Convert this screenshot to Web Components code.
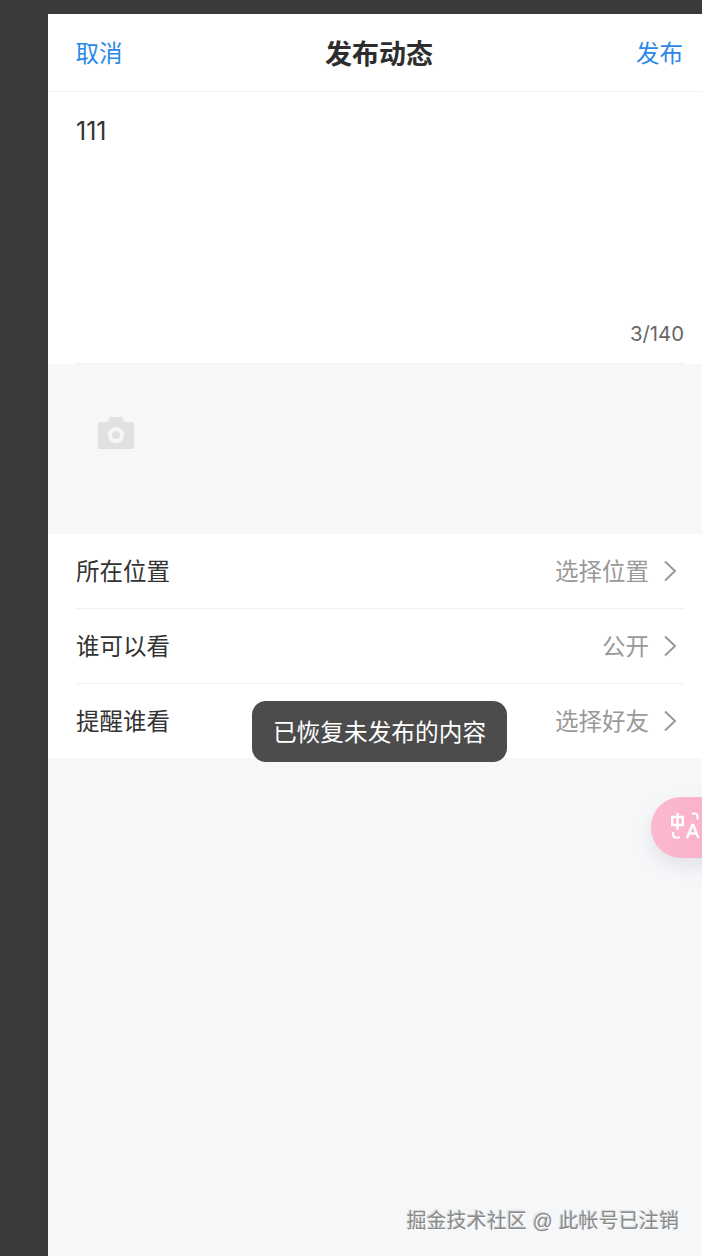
<!DOCTYPE html>
<html lang="zh">
<head>
<meta charset="utf-8">
<title>发布动态</title>
<style>
	html, body {margin: 0; height: 100%;}
	body {
		background: #3a3a3a;
		font-family: "Liberation Sans", "Noto Sans CJK SC", sans-serif;
		overflow: hidden;
	}
</style>
</head>
<body>
<publish-page>
	<nav-bar title="发布动态" left="取消" right="发布"></nav-bar>
	<text-box value="111" count="3/140"></text-box>
	<photo-strip></photo-strip>
	<option-list>
		<option-row label="所在位置" value="选择位置"></option-row>
		<option-row label="谁可以看" value="公开"></option-row>
		<option-row label="提醒谁看" value="选择好友" last></option-row>
	</option-list>
	<toast-message>已恢复未发布的内容</toast-message>
	<translate-fab></translate-fab>
	<water-mark>掘金技术社区 @ 此帐号已注销</water-mark>
</publish-page>

<script>
class PublishPage extends HTMLElement {
	constructor(){
		super()
		this.attachShadow({mode: 'open'}).innerHTML = `<style>
			:host {
				display: block;
				position: relative;
				box-sizing: border-box;
				margin: 14px 0 0 48px;
				height: 1242px;
				background: #f6f7f9;
				overflow: hidden;
			}
		</style><slot></slot>`
	}
}

class NavBar extends HTMLElement {
	constructor(){
		super()
		this.attachShadow({mode: 'open'}).innerHTML = `<style>
			:host {
				display: flex;
				justify-content: space-between;
				align-items: center;
				box-sizing: border-box;
				height: 78px;
				padding: 0 19px 1px 27.5px;
				background: #fff;
				border-bottom: 1px solid #f2f2f2;
				font-size: 23.5px;
				color: #2b88ea;
				position: relative;
			}
			b {
				position: absolute;
				left: 277px;
				font-size: 27px;
				font-weight: 700;
				color: #2e2e2e;
			}
		</style>
		<span>${this.getAttribute('left')}</span>
		<b>${this.getAttribute('title')}</b>
		<span>${this.getAttribute('right')}</span>`
	}
}

class TextBox extends HTMLElement {
	constructor(){
		super()
		this.attachShadow({mode: 'open'}).innerHTML = `<style>
			:host {
				display: block;
				box-sizing: border-box;
				height: 272px;
				padding: 24px 18px 0 28px;
				background: #fff;
				font-family: Inter, "Liberation Sans", sans-serif;
			}
			.box {
				display: flex;
				flex-direction: column;
				justify-content: space-between;
				box-sizing: border-box;
				height: 248px;
				padding-bottom: 17px;
				border-bottom: 1px solid #f0f0f0;
			}
			.value {font-size: 25px; line-height: 28px; padding-top: 1px; color: #333;}
			.count {font-size: 20.3px; line-height: 24px; color: #666; text-align: right;}
		</style>
		<div class="box">
			<div class="value">${this.getAttribute('value')}</div>
			<div class="count">${this.getAttribute('count')}</div>
		</div>`
	}
}

class PhotoStrip extends HTMLElement {
	constructor(){
		super()
		this.attachShadow({mode: 'open'}).innerHTML = `<style>
			:host {
				display: block;
				box-sizing: border-box;
				height: 170px;
				padding: 53px 0 0 50px;
			}
			svg {display: block;}
		</style>
		<svg width="36" height="32" viewBox="0 0 36 32">
			<path fill="#e0e1e3" d="M0 6.5C0 5.7.6 5 1.5 5H10l1.2-3.4C11.6.6 12.4 0 13.4 0h9.2c1 0 1.8.6 2.2 1.6L26 5h8.5c.9 0 1.5.7 1.5 1.5V31c0 .6-.4 1-1 1H1c-.6 0-1-.4-1-1z"/>
			<circle cx="18" cy="18" r="8" fill="#f6f7f9"/>
			<circle cx="18" cy="18" r="4" fill="#e0e1e3"/>
		</svg>`
	}
}

class OptionList extends HTMLElement {
	constructor(){
		super()
		this.attachShadow({mode: 'open'}).innerHTML = `<style>
			:host {display: block; background: #fff; padding-left: 28px;}
		</style><slot></slot>`
	}
}

class OptionRow extends HTMLElement {
	constructor(){
		super()
		const last = this.hasAttribute('last')
		this.attachShadow({mode: 'open'}).innerHTML = `<style>
			:host {
				display: flex;
				align-items: center;
				box-sizing: border-box;
				height: ${last ? 74 : 75}px;
				margin-right: 18px;
				padding-bottom: 2px;
				border-bottom: ${last ? 'none' : '1px solid #f0f0f0'};
				font-size: 23.5px;
				color: #333;
			}
			.value {margin-left: auto; color: #999;}
			svg {display: block; margin: 2px 7px 0 14px;}
		</style>
		<span>${this.getAttribute('label')}</span>
		<span class="value">${this.getAttribute('value')}</span>
		<svg width="14" height="22" viewBox="0 0 14 22">
			<path d="M2 1.5 L12 11 L2 20.5" fill="none" stroke="#999" stroke-width="2"/>
		</svg>`
	}
}

class ToastMessage extends HTMLElement {
	constructor(){
		super()
		this.attachShadow({mode: 'open'}).innerHTML = `<style>
			:host {
				position: absolute;
				left: 204px;
				top: 687px;
				display: flex;
				align-items: center;
				justify-content: center;
				width: 255px;
				height: 61px;
				padding-bottom: 2px;
				box-sizing: border-box;
				border-radius: 14px;
				background: #4c4c4c;
				color: #fff;
				font-size: 23.7px;
				white-space: nowrap;
			}
		</style><slot></slot>`
	}
}

class TranslateFab extends HTMLElement {
	constructor(){
		super()
		this.attachShadow({mode: 'open'}).innerHTML = `<style>
			:host {
				position: absolute;
				left: 603px;
				top: 783px;
				display: block;
				width: 70px;
				height: 61px;
				border-radius: 30px 0 0 30px;
				background: linear-gradient(90deg, #fbb9cf, #f9afc8);
				box-shadow: 0 8px 16px rgba(120, 130, 140, .16);
			}
			svg {position: absolute; left: 19px; top: 14px;}
			text {font: 400 20px "Liberation Sans", sans-serif; fill: #fff; stroke: #fff; stroke-width: .5;}
		</style>
		<svg width="34" height="32" viewBox="0 0 34 32">
			<path d="M2.2 6h10.6v8H2.2z M7.5 2v17" fill="none" stroke="#fff" stroke-width="2.4"/>
			<path d="M22 2.5h2.5a3 3 0 0 1 3 3v3 M3 21v2.5a3 3 0 0 0 3 3h4" fill="none" stroke="#fff" stroke-width="2.2"/>
			<text x="16" y="27">A</text>
		</svg>`
	}
}

class WaterMark extends HTMLElement {
	constructor(){
		super()
		this.attachShadow({mode: 'open'}).innerHTML = `<style>
			:host {
				position: absolute;
				right: 23px;
				top: 1194px;
				font-size: 20px;
				letter-spacing: .08px;
				line-height: 26px;
				color: #8a8a8a;
				white-space: nowrap;
				text-shadow: 1px 1px 1px rgba(255, 255, 255, .95), -1px -1px 1px rgba(120, 120, 120, .3);
			}
		</style><slot></slot>`
	}
}

customElements.define('publish-page', PublishPage)
customElements.define('nav-bar', NavBar)
customElements.define('text-box', TextBox)
customElements.define('photo-strip', PhotoStrip)
customElements.define('option-list', OptionList)
customElements.define('option-row', OptionRow)
customElements.define('toast-message', ToastMessage)
customElements.define('translate-fab', TranslateFab)
customElements.define('water-mark', WaterMark)
</script>
</body>
</html>
